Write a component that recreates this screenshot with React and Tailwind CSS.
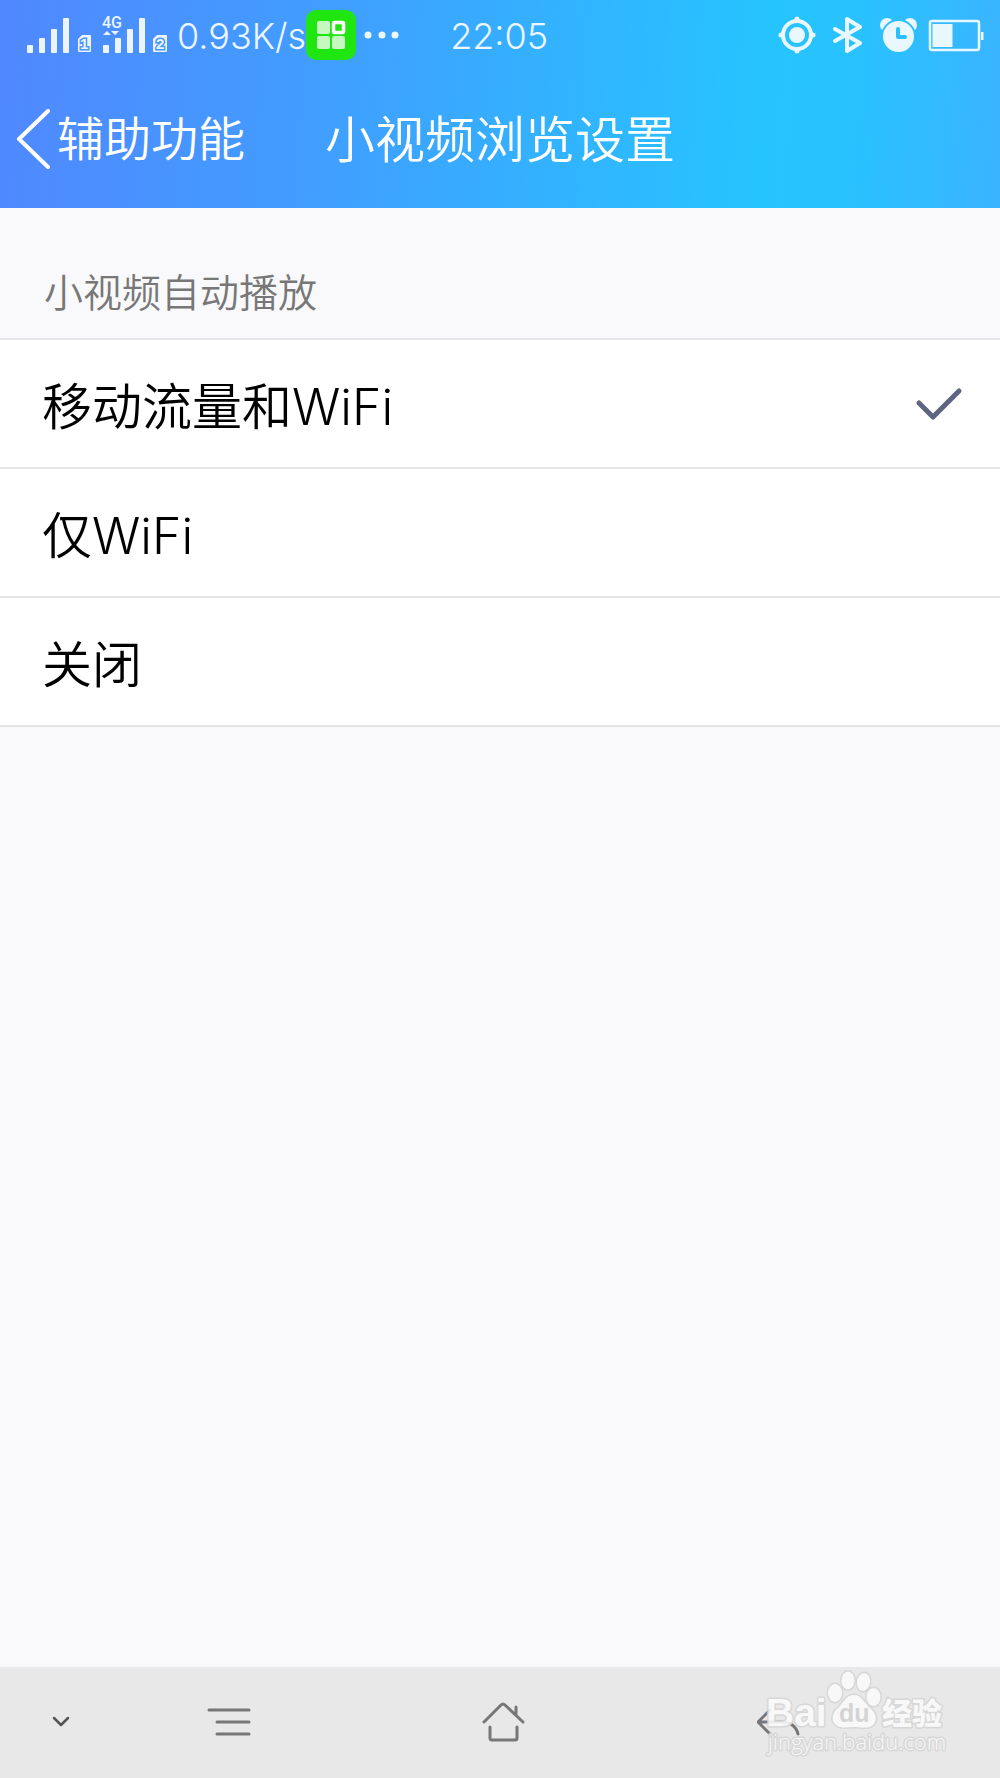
import React, { useState } from 'react';

const options = [
  { id: 'all', label: '移动流量和WiFi' },
  { id: 'wifi', label: '仅WiFi' },
  { id: 'off', label: '关闭' },
];

function Signal() {
  return (
    <svg width="140" height="56" viewBox="27 5 140 56" fill="#ecf4ff" className="shrink-0">
      <rect x="27" y="43" width="6" height="8" rx="1" />
      <rect x="39" y="36" width="6" height="15" rx="1" />
      <rect x="51" y="27" width="6" height="24" rx="1" />
      <rect x="63" y="16" width="6" height="35" rx="1" />
      <path d="M82 33H90Q91 33 91 34V49Q91 50 90 50H79Q78 50 78 49V37Z" />
      <text x="80" y="47" fontSize="15" fontWeight="700" fontFamily="Liberation Sans, sans-serif" stroke="#4a94ff" strokeWidth="3" paintOrder="stroke">1</text>

      <text x="102" y="26" fontSize="16" fontWeight="500" fontFamily="Roboto, sans-serif">4G</text>
      <path d="M103 33L107 29L111 33ZM111 29H119L115 33Z" />
      <rect x="103" y="43" width="6" height="8" rx="1" />
      <rect x="115" y="36" width="6" height="15" rx="1" />
      <rect x="127" y="27" width="6" height="24" rx="1" />
      <rect x="139" y="16" width="6" height="35" rx="1" />
      <path d="M157 33H166Q167 33 167 34V49Q167 50 166 50H154Q153 50 153 49V37Z" />
      <text x="156" y="47" fontSize="15" fontWeight="700" fontFamily="Liberation Sans, sans-serif" stroke="#4798ff" strokeWidth="3" paintOrder="stroke">2</text>
    </svg>
  );
}

function AppBadge() {
  return (
    <svg width="50" height="50" viewBox="0 0 50 50" className="shrink-0">
      <rect width="50" height="50" rx="10" fill="#1fe610" />
      <rect x="11" y="11" width="13" height="13" rx="2" fill="#c5f9c1" />
      <rect x="11" y="26" width="13" height="13" rx="2" fill="#c5f9c1" />
      <rect x="26" y="26" width="13" height="13" rx="2" fill="#c5f9c1" />
      <rect x="27.5" y="12.5" width="10" height="10" rx="1" fill="none" stroke="#fff" strokeWidth="3.5" />
    </svg>
  );
}

function StatusIcons() {
  return (
    <svg width="206" height="40" viewBox="778 14 206 40" fill="none" stroke="#e9f8ff" className="shrink-0">
      <circle cx="797" cy="34" r="14" strokeWidth="4" />
      <circle cx="797" cy="34" r="8" fill="#e9f8ff" stroke="none" />
      <path d="M797 18V19M797 49V50M781 34H782M812 34H813" strokeWidth="5" strokeLinecap="round" />
      <path d="M835 28L860 42L847 50V18L860 26L835 40" strokeWidth="4" strokeLinejoin="round" strokeLinecap="round" />
      <g stroke="none" fill="#e9f8ff">
        <circle cx="887" cy="24" r="7" />
        <circle cx="910" cy="24" r="7" />
      </g>
      <circle cx="898.5" cy="35.5" r="16.5" fill="#e9f8ff" stroke="#2cbfff" strokeWidth="2" />
      <path d="M898 28V36H905" stroke="#2cbfff" strokeWidth="4" strokeLinecap="round" strokeLinejoin="round" />
      <rect x="930" y="20" width="49" height="29" rx="2" strokeWidth="2.5" />
      <rect x="932.5" y="23" width="20" height="23" fill="#e9f8ff" stroke="none" />
      <rect x="981" y="31" width="2.5" height="8" fill="#e9f8ff" stroke="none" />
    </svg>
  );
}

function Watermark() {
  return (
    <svg
      width="190"
      height="96"
      viewBox="760 1666 190 96"
      fill="#fafafa"
      stroke="#d6d6d6"
      strokeWidth="3"
      paintOrder="stroke"
      strokeLinejoin="round"
      className="pointer-events-none absolute right-[50px] bottom-4 opacity-90"
    >
      <text x="766" y="1726" fontSize="39" fontWeight="700" fontFamily="Liberation Sans, sans-serif">Bai</text>
      <ellipse cx="835" cy="1693" rx="7" ry="9" />
      <ellipse cx="848" cy="1680.5" rx="6.5" ry="9" />
      <ellipse cx="863.5" cy="1682" rx="6.5" ry="9" transform="rotate(10 863.5 1682)" />
      <ellipse cx="873.5" cy="1697" rx="7" ry="9" />
      <path d="M854 1695C846 1695 844 1702 838 1708C832 1713 831 1720 835 1724C839 1729 846 1727 854 1727C862 1727 869 1729 873 1725C878 1720 876 1713 870 1708C864 1703 862 1695 854 1695Z" />
      <text x="839" y="1722" fontSize="25" fontWeight="700" fontFamily="Liberation Sans, sans-serif" fill="#d2d2d2" stroke="none">du</text>
      <text x="882" y="1724" fontSize="30" fontWeight="900" fontFamily="Noto Sans CJK SC, sans-serif">经验</text>
      <text x="768" y="1750" fontSize="22" fontFamily="Open Sans, sans-serif">jingyan.baidu.com</text>
    </svg>
  );
}

export default function App() {
  const [selected, setSelected] = useState('all');

  return (
    <div className="flex min-h-screen flex-col bg-[#f9f9fb] font-['Inter','Noto_Sans_CJK_SC',sans-serif] font-[350]">
      <header className="bg-[linear-gradient(94deg,#5088ff_0%,#429cff_30%,#26c4ff_76%,#28c2ff_84%,#3ab4ff_100%)] text-white">
        <div className="flex h-[69px] items-center pr-4 pl-[27px] text-[36px] text-[#ecf6ff]">
          <Signal />
          <span className="ml-[10px] pt-[2px]">0.93K/s</span>
          <AppBadge />
          <svg width="40" height="8" viewBox="0 0 40 8" fill="#ecf6ff" className="ml-2 shrink-0">
            <circle cx="4" cy="4" r="3.5" />
            <circle cx="18" cy="4" r="3.5" />
            <circle cx="31" cy="4" r="3.5" />
          </svg>
          <time className="ml-[46px] pt-[2px]">22:05</time>
          <div className="ml-auto">
            <StatusIcons />
          </div>
        </div>

        <div className="grid h-[139px] grid-cols-[1fr_auto_1fr] items-center px-4">
          <button className="flex items-center gap-[6px] justify-self-start text-[47px]">
            <svg width="35" height="60" viewBox="0 0 35 60" fill="none" stroke="#fff" strokeWidth="4" strokeLinecap="round" strokeLinejoin="round">
              <path d="M32 2L3 30L32 58" />
            </svg>
            <span className="pt-[2px]">辅助功能</span>
          </button>
          <h1 className="pt-1 text-[50px]">小视频浏览设置</h1>
        </div>
      </header>

      <main className="flex-1">
        <fieldset>
          <legend className="px-11 pt-[55px] pb-4 text-[39px] leading-[59px] text-[#777]">小视频自动播放</legend>
          <div className="border-t-2 border-[#e5e5e7] bg-white">
            {options.map((option) => (
              <label key={option.id} className="flex h-[129px] cursor-pointer items-center border-b-2 border-[#e5e5e7] pr-9 pl-[42px] text-[50px] text-black">
                <span className="flex-1 pt-2">{option.label}</span>
                <input
                  type="radio"
                  name="autoplay"
                  value={option.id}
                  checked={selected === option.id}
                  onChange={() => setSelected(option.id)}
                  className="peer size-0 appearance-none"
                />
                <svg width="50" height="40" viewBox="0 0 50 40" fill="none" stroke="#5f6480" strokeWidth="5" strokeLinecap="round" strokeLinejoin="round" className="invisible peer-checked:visible">
                  <path d="M5 19L19 33L45 7" />
                </svg>
              </label>
            ))}
          </div>
        </fieldset>
      </main>

      <nav className="relative grid h-[111px] grid-cols-[92px_1fr_1fr_1fr_84px] bg-[#e8e8e8] pb-[2px] text-[#777]">
        <button aria-label="收起" className="flex items-center justify-end pr-[22px]">
          <svg width="18" height="12" viewBox="0 0 18 12" fill="none" stroke="#555" strokeWidth="2.5" strokeLinecap="round" strokeLinejoin="round">
            <path d="M2 2L9 9L16 2" />
          </svg>
        </button>
        <button aria-label="菜单" className="flex items-center justify-center">
          <svg width="44" height="30" viewBox="0 0 44 30" fill="none" stroke="currentColor" strokeWidth="3" strokeLinecap="round">
            <path d="M2 3H42M10 15H42M10 27H42" />
          </svg>
        </button>
        <button aria-label="主页" className="flex items-center justify-center">
          <svg width="44" height="40" viewBox="0 0 44 40" fill="none" stroke="currentColor" strokeWidth="3" strokeLinecap="round" strokeLinejoin="round">
            <path d="M2 20L19 3Q21 1 23 3L41 20M34 5V13M8 25V36Q8 38 10 38H33Q35 38 35 36V25" />
          </svg>
        </button>
        <button aria-label="返回" className="flex items-center justify-center">
          <svg width="44" height="28" viewBox="0 0 44 28" fill="none" stroke="currentColor" strokeWidth="3" strokeLinecap="round" strokeLinejoin="round">
            <path d="M13 2L1 14L13 26M1 14H24Q38 14 41 26" />
          </svg>
        </button>
        <Watermark />
      </nav>
    </div>
  );
}
